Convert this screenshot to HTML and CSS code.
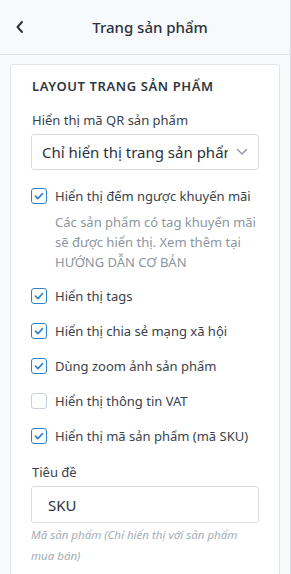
FILE: index.html
```html
<!DOCTYPE html>
<html lang="vi">
<head>
<meta charset="utf-8">
<link rel="stylesheet" href="styles.css">
</head>
<body>
<div class="page">
  <header class="topbar">
    <span class="back"><svg width="10" height="14" viewBox="0 0 10 14"><path d="M7 2 L2.5 7 L7 12" fill="none" stroke="#333" stroke-width="2" stroke-linecap="round" stroke-linejoin="round"/></svg></span>
    <h1 class="title">Trang sản phẩm</h1>
  </header>
  <main class="content">
    <section class="card">
      <h2 class="card-title">LAYOUT TRANG SẢN PHẨM</h2>
      <label class="field-label">Hiển thị mã QR sản phẩm</label>
      <div class="select">
        <span class="select-text">Chỉ hiển thị trang sản phẩm</span>
        <svg class="select-arrow" width="12" height="8" viewBox="0 0 12 8"><path d="M1.5 1.5 L6 6 L10.5 1.5" fill="none" stroke="#8a96a3" stroke-width="1.4" stroke-linecap="round" stroke-linejoin="round"/></svg>
      </div>
      <div class="checks">
        <div class="check-item">
          <div class="check-row"><span class="box on"><svg viewBox="0 0 16 16" width="14" height="14"><path d="M4 8.2 L6.8 11 L12 5.3" fill="none" stroke="#2f84c7" stroke-width="1.8" stroke-linecap="round" stroke-linejoin="round"/></svg></span><span>Hiển thị đếm ngược khuyến mãi</span></div>
          <p class="desc">Các sản phẩm có tag khuyến mãi sẽ được hiển thị. Xem thêm tại HƯỚNG DẪN CƠ BẢN</p>
        </div>
        <div class="check-row"><span class="box on"><svg viewBox="0 0 16 16" width="14" height="14"><path d="M4 8.2 L6.8 11 L12 5.3" fill="none" stroke="#2f84c7" stroke-width="1.8" stroke-linecap="round" stroke-linejoin="round"/></svg></span><span>Hiển thị tags</span></div>
        <div class="check-row"><span class="box on"><svg viewBox="0 0 16 16" width="14" height="14"><path d="M4 8.2 L6.8 11 L12 5.3" fill="none" stroke="#2f84c7" stroke-width="1.8" stroke-linecap="round" stroke-linejoin="round"/></svg></span><span>Hiển thị chia sẻ mạng xã hội</span></div>
        <div class="check-row"><span class="box on"><svg viewBox="0 0 16 16" width="14" height="14"><path d="M4 8.2 L6.8 11 L12 5.3" fill="none" stroke="#2f84c7" stroke-width="1.8" stroke-linecap="round" stroke-linejoin="round"/></svg></span><span>Dùng zoom ảnh sản phẩm</span></div>
        <div class="check-row"><span class="box"></span><span>Hiển thị thông tin VAT</span></div>
        <div class="check-row"><span class="box on"><svg viewBox="0 0 16 16" width="14" height="14"><path d="M4 8.2 L6.8 11 L12 5.3" fill="none" stroke="#2f84c7" stroke-width="1.8" stroke-linecap="round" stroke-linejoin="round"/></svg></span><span>Hiển thị mã sản phẩm (mã SKU)</span></div>
      </div>
      <label class="field-label title-label">Tiêu đề</label>
      <div class="input">SKU</div>
      <p class="hint">Mã sản phẩm (Chỉ hiển thị với sản phẩm mua bán)</p>
    </section>
  </main>
</div>
</body>
</html>
```

FILE: styles.css
```css
* { box-sizing: border-box; }
html, body { margin: 0; padding: 0; }
body {
  background: #f8f9fb;
  font-family: "Noto Sans", "Open Sans", sans-serif;
  color: #3a424c;
  width: 291px;
  height: 574px;
  overflow: hidden;
}
.page {
  height: 574px;
  border-right: 1px solid #d7dbe0;
  width: 291px;
}
.topbar {
  height: 55px;
  border-bottom: 1px solid #dfe3e8;
  display: flex;
  align-items: center;
  position: relative;
  background: #f8f9fb;
}
.back {
  position: absolute;
  left: 15px;
  top: 20px;
  display: flex;
}
.title {
  margin: 0 auto;
  font-size: 15px;
  font-weight: 500;
  color: #2b323b;
  transform: translateX(5px);
}
.content {
  padding: 9px 10px 0 10px;
}
.card {
  background: #fff;
  border: 1px solid #e1e5ea;
  border-radius: 3px;
  padding: 11px 20px 20px 20px;
  width: 270px;
}
.card-title {
  margin: 0;
  font-size: 13px;
  font-weight: 600;
  letter-spacing: 0.6px;
  color: #2f3740;
  line-height: 20px;
  padding-left: 1px;
}
.field-label {
  display: block;
  font-size: 13px;
  line-height: 20px;
  margin-top: 14px;
  color: #3a424c;
  padding-left: 1px;
}
.select {
  margin-top: 4px;
  height: 36px;
  border: 1px solid #d9dee4;
  border-radius: 3px;
  display: flex;
  align-items: center;
  padding: 0 10px 0 10px;
  gap: 8px;
}
.select-text {
  flex: 1;
  font-size: 15px;
  white-space: nowrap;
  overflow: hidden;
  color: #2b323b;
}
.checks {
  margin-top: 16px;
  display: flex;
  flex-direction: column;
  gap: 15px;
}
.check-item {
  margin-bottom: -1px;
}
.check-row {
  display: flex;
  align-items: center;
  gap: 8px;
  font-size: 13px;
  line-height: 20px;
  color: #3a424c;
}
.box {
  width: 16px;
  height: 16px;
  border: 1px solid #c9d0d7;
  border-radius: 3px;
  background: #fff;
  flex: none;
  display: flex;
  align-items: center;
  justify-content: center;
}
.box.on {
  border-color: #2f84c7;
}
.desc {
  margin: 6px 0 0 24px;
  font-size: 13px;
  line-height: 20px;
  color: #8c96a1;
}
.title-label {
  margin-top: 16px;
}
.input {
  margin-top: 4px;
  height: 37px;
  border: 1px solid #d9dee4;
  border-radius: 3px;
  display: flex;
  align-items: center;
  padding-left: 16px;
  font-size: 15px;
  color: #2b323b;
}
.hint {
  margin: 1px 0 0 0;
  font-size: 11.5px;
  line-height: 21px;
  font-style: italic;
  color: #a3acb6;
}
```
